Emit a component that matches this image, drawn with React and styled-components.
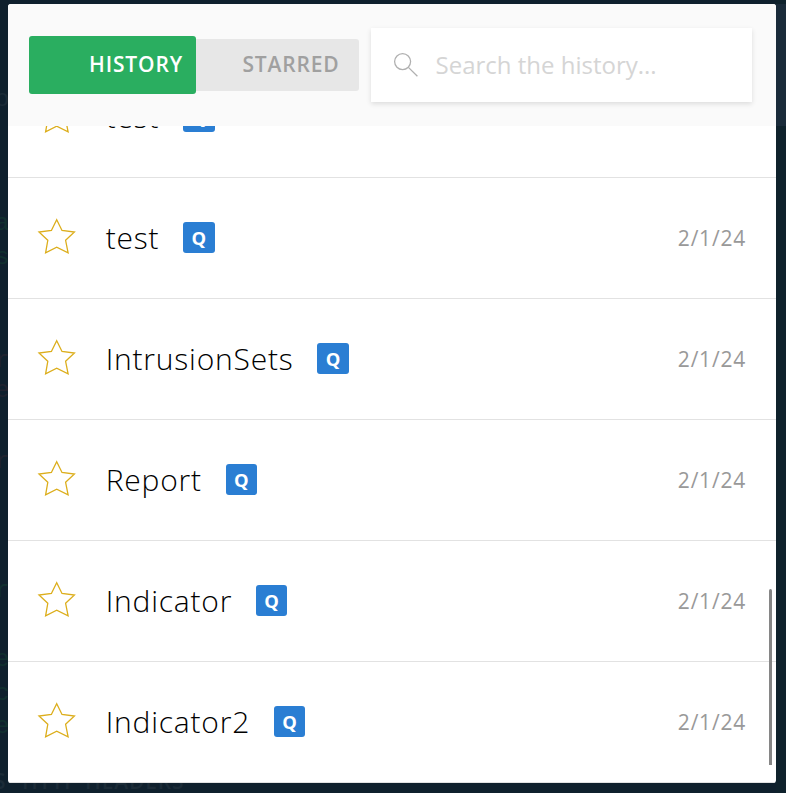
import React from "react";
import styled, { createGlobalStyle } from "styled-components";

const Global = createGlobalStyle`
  * { box-sizing: border-box; }
  html, body { margin: 0; height: 100%; overflow: hidden; }
  body { background: #0f202d; font-family: "Open Sans", sans-serif; }
`;
const Page = styled.div`
  position: relative;
  height: 793px;
  padding: 4px 10px 10px 8px;
  overflow: hidden;
  background: linear-gradient(90deg, #0f202d 776px, #0f222c 776px);
`;
const TopBar = styled.div`
  position: absolute;
  top: 4px;
  right: 0;
  width: 10px;
  height: 122px;
  background: #1a2b3a;
`;
const Ghost = styled.span`
  position: absolute;
  left: -5px;
  top: ${(p) => p.$y - 12}px;
  color: ${(p) => p.$color};
  font: 24px/28px "Liberation Mono", monospace;
`;
const GhostTitle = styled.span`
  position: absolute;
  left: ${(p) => p.$x}px;
  top: 766px;
  white-space: pre;
  color: #1b2b37;
  font-size: 21px;
  line-height: 30px;
  font-weight: 600;
  letter-spacing: 0.85px;
`;
const Panel = styled.main`
  position: relative;
  display: flex;
  flex-direction: column;
  height: 779px;
  border-radius: 3px;
  overflow: hidden;
  background: #fff;
`;
const Header = styled.header`
  flex: none;
  display: flex;
  align-items: center;
  height: 122px;
  padding: 0 24px 0 21px;
  background: #fafafa;
`;
const Tab = styled.button`
  display: flex;
  align-items: center;
  justify-content: flex-end;
  border: 0;
  width: ${(p) => (p.$active ? 167 : 163)}px;
  height: ${(p) => (p.$active ? 58 : 52)}px;
  padding: 0 ${(p) => (p.$active ? 13 : 19.4)}px 2px 0;
  border-radius: ${(p) => (p.$active ? "3px" : "0 3px 3px 0")};
  background: ${(p) => (p.$active ? "#2aae60" : "#e7e7e7")};
  color: ${(p) => (p.$active ? "#fff" : "#a0a0a0")};
  font: 600 21px/28px "Open Sans", sans-serif;
  letter-spacing: 0.85px;
`;
const Search = styled.label`
  display: flex;
  align-items: center;
  width: 381px;
  height: 74px;
  margin-left: 12px;
  padding: 0 0 1px 22px;
  background: #fff;
  box-shadow: 0 2px 5px rgba(0, 0, 0, 0.12);
`;
const SearchInput = styled.input`
  width: 290px;
  margin: 1px 0 0 16.5px;
  padding: 0;
  border: 0;
  outline: 0;
  background: transparent;
  font: 24px/32px "Open Sans", sans-serif;
  &::placeholder { color: #d5d5d5; opacity: 1; }
`;
const List = styled.div`
  flex: 1;
  display: flex;
  flex-direction: column;
  justify-content: flex-end;
  overflow: hidden;
`;
const Row = styled.div`
  flex: none;
  display: flex;
  align-items: center;
  height: 121px;
  padding: 0 30px 0 29px;
  border-bottom: 1px solid #e2e2e2;
`;
const Name = styled.span`
  margin-left: 28.7px;
  color: #000;
  font-size: 30px;
  line-height: 40px;
  font-weight: 300;
  letter-spacing: 0.79px;
`;
const Badge = styled.span`
  display: flex;
  align-items: center;
  justify-content: center;
  width: 31.6px;
  height: 31px;
  margin: 0 0 2px 23.7px;
  padding-top: 1px;
  border-radius: 3px;
  background: #2a7ed3;
  color: #fff;
  font-size: 18.4px;
  font-weight: 700;
`;
const When = styled.time`
  margin-left: auto;
  color: #999;
  font-size: 21px;
  line-height: 28px;
  letter-spacing: 0.79px;
`;
const Thumb = styled.div`
  position: absolute;
  right: 4px;
  top: 585px;
  width: 3px;
  height: 176px;
  border-radius: 2px 2px 0 0;
  background: #868686;
`;
const StarIcon = styled.svg`
  flex: none;
  margin-bottom: 4px;
`;

const Star = () => (
  <StarIcon width="40" height="38" viewBox="0 0 40 38" fill="none" stroke="#dcae1c" strokeWidth="1.3">
    <path d="M19.7 2.7 L25 13.5 L37.4 15 L28.6 23.3 L31.1 35.8 L19.7 30.2 L8.6 35.8 L10.8 23.3 L2 15 L14.4 13.5 Z" />
  </StarIcon>
);
const Magnifier = () => (
  <svg width="26" height="26" viewBox="0 0 26 26" fill="none" stroke="#b0b0b0" strokeWidth="1.3">
    <circle cx="9.6" cy="9.6" r="8" />
    <path d="M15.4 15.4 L24.4 24.2" />
  </svg>
);

const ROWS = ["test", "test", "IntrusionSets", "Report", "Indicator", "Indicator2"];

const TEAL = "#11302f";
const PLUM = "#20232f";
const GHOSTS = [
  ["o", 98, "#1b2b37"],
  ["a", 222, TEAL],
  ["s", 256, TEAL],
  ["r", 359, PLUM],
  ["e", 389, PLUM],
  ["r", 460, PLUM],
  ["r", 589, TEAL],
  ["e", 658, TEAL],
  ["c", 692, TEAL],
  ["e", 725, TEAL],
];

export default function App() {
  return (
    <>
      <Global />
      <Page>
        <TopBar />
        {GHOSTS.map(([text, y, color]) => (
          <Ghost key={y} $y={y} $color={color}>{text}</Ghost>
        ))}
        <GhostTitle $x={-6}>S</GhostTitle>
        <GhostTitle $x={22}>HTTP</GhostTitle>
        <GhostTitle $x={85}>HEADERS</GhostTitle>
        <Panel>
          <Header>
            <Tab $active>HISTORY</Tab>
            <Tab>STARRED</Tab>
            <Search>
              <Magnifier />
              <SearchInput placeholder="Search the history..." />
            </Search>
          </Header>
          <List>
            {ROWS.map((name, i) => (
              <Row key={i}>
                <Star />
                <Name>{name}</Name>
                <Badge>Q</Badge>
                <When>2/1/24</When>
              </Row>
            ))}
          </List>
          <Thumb />
        </Panel>
      </Page>
    </>
  );
}
